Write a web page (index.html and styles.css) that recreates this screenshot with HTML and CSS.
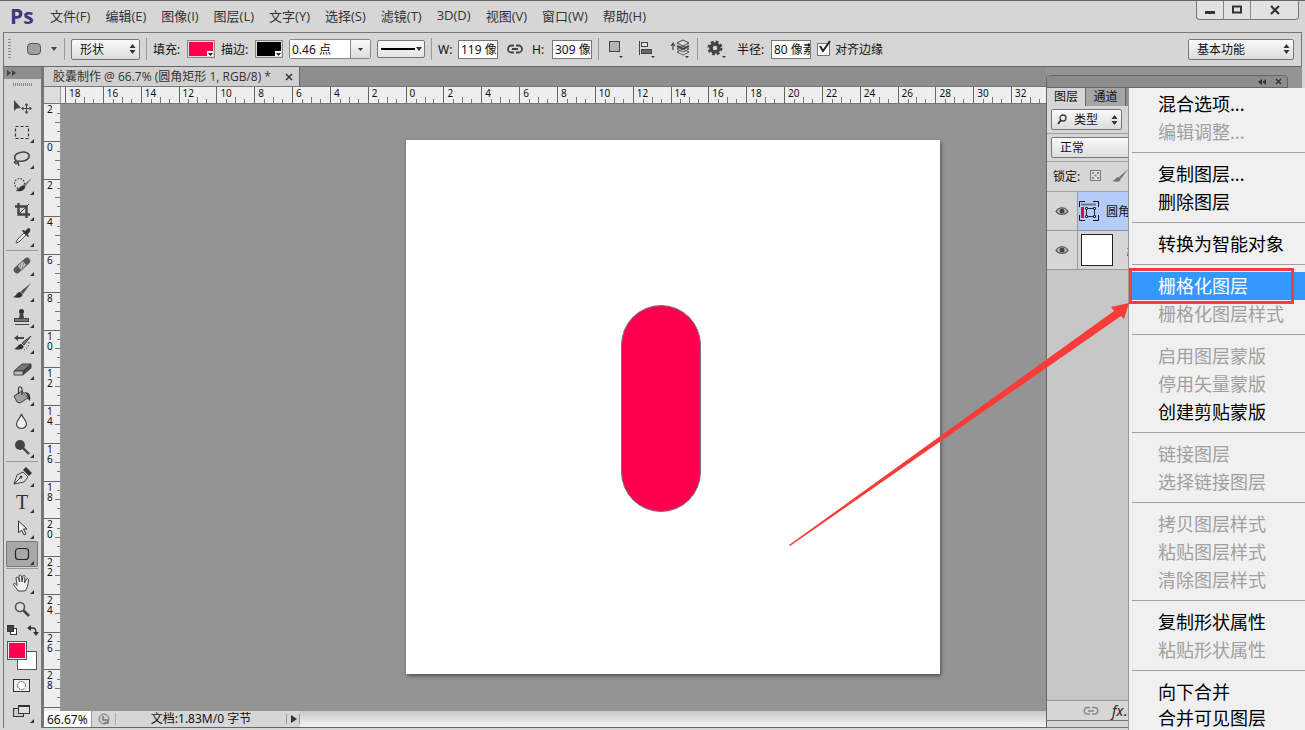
FILE: index.html
```
<!DOCTYPE html>
<html lang="zh-CN">
<head>
    <meta charset="UTF-8">
    <meta name="viewport" content="width=device-width, initial-scale=1.0">
    <title>胶囊制作</title>
    <link rel="stylesheet" href="styles.css">
</head>
<body>
    <div class="app">
        <header class="menubar">
            <div class="logo">Ps</div>
            <nav class="menus">
                <a href="#">文件(F)</a>
                <a href="#">编辑(E)</a>
                <a href="#">图像(I)</a>
                <a href="#">图层(L)</a>
                <a href="#">文字(Y)</a>
                <a href="#">选择(S)</a>
                <a href="#">滤镜(T)</a>
                <a href="#">3D(D)</a>
                <a href="#">视图(V)</a>
                <a href="#">窗口(W)</a>
                <a href="#">帮助(H)</a>
            </nav>
            <div class="window-controls">
                <button type="button" aria-label="最小化"><svg width="12" height="12"><path d="M1 7h10v3H1z" fill="#333"/></svg></button>
                <button type="button" aria-label="最大化"><svg width="12" height="12"><rect x="2" y="2.500" width="8" height="6" fill="none" stroke="#333" stroke-width="2"/></svg></button>
                <button type="button" class="close" aria-label="关闭"><svg width="12" height="12"><path d="M2 2l8 8M10 2l-8 8" stroke="#333" stroke-width="2.200"/></svg></button>
            </div>
        </header>

        <div class="options">
            <span class="grip"></span>
            <button type="button" class="preset" aria-label="圆角矩形工具">
                <svg width="32" height="16"><rect x="1.500" y="2.500" width="13" height="11" rx="3.500" fill="#a0a0a0" stroke="#555"/><path d="M25 6h6l-3 4z" fill="#444"/></svg>
            </button>
            <span class="divider"></span>
            <span class="select-wrap mode">
                <select aria-label="工具模式"><option>形状</option></select>
                <svg width="7" height="10"><path d="M3.500 0L6.500 4h-6zM3.500 10L6.500 6h-6z" fill="#333"/></svg>
            </span>
            <span class="divider"></span>
            <span class="caption">填充:</span>
            <button type="button" class="swatch fill" aria-label="填充颜色"><svg width="7" height="6"><path d="M0 0h7v6H0z" fill="#fff"/><path d="M1 2h5l-2.500 3z" fill="#222"/></svg></button>
            <span class="caption">描边:</span>
            <button type="button" class="swatch stroke" aria-label="描边颜色"><svg width="7" height="6"><path d="M0 0h7v6H0z" fill="#fff"/><path d="M1 2h5l-2.500 3z" fill="#222"/></svg></button>
            <span class="combo">
                <input type="text" value="0.46 点" aria-label="描边宽度">
                <button type="button" aria-label="描边宽度选项"><svg width="7" height="5"><path d="M1 1h5L3.500 4z" fill="#333"/></svg></button>
            </span>
            <button type="button" class="line-style" aria-label="描边类型"><svg width="44" height="18"><path d="M3 9h34" stroke="#000" stroke-width="2"/><path d="M38 7h6l-3 4z" fill="#333"/></svg></button>
            <span class="divider"></span>
            <label class="caption size" for="shape-w">W:</label>
            <input type="text" class="field" id="shape-w" value="119 像素">
            <button type="button" class="icon link" aria-label="链接宽高">
                <svg width="16" height="12"><path d="M7 2.500H4.500a3.500 3.500 0 0 0 0 7H7M9 2.500h2.500a3.500 3.500 0 0 1 0 7H9M5 6h6" fill="none" stroke="#444" stroke-width="1.800"/></svg>
            </button>
            <label class="caption size" for="shape-h">H:</label>
            <input type="text" class="field" id="shape-h" value="309 像素">
            <span class="divider"></span>
            <button type="button" class="icon" aria-label="路径操作">
                <svg width="20" height="22"><rect x="4.500" y="3.500" width="10" height="10" fill="#b4b4b4" stroke="#444"/><path d="M14 18h4l-2 2z" fill="#333"/></svg>
            </button>
            <button type="button" class="icon" aria-label="路径对齐">
                <svg width="20" height="22"><path d="M2.500 3v14" stroke="#444"/><rect x="4.500" y="4.500" width="6" height="4" fill="#ddd" stroke="#444"/><rect x="4.500" y="11.500" width="10" height="4" fill="#666" stroke="#444"/><path d="M14 18h4l-2 2z" fill="#333"/></svg>
            </button>
            <button type="button" class="icon" aria-label="路径排列">
                <svg width="22" height="22"><path d="M4 12V6M2 8l2-3 2 3" fill="none" stroke="#444" stroke-width="1.200"/><path d="M8 14l6 3 6-3-6-3zM8 11l6 3 6-3-6-3z" fill="#ddd" stroke="#555"/><path d="M8 8l6 3 6-3" fill="none" stroke="#444" stroke-width="2"/><path d="M8 5l6 3 6-3-6-3z" fill="#ddd" stroke="#444"/><path d="M16 18h4l-2 2z" fill="#333"/></svg>
            </button>
            <span class="divider"></span>
            <button type="button" class="icon gear" aria-label="几何选项">
                <svg width="20" height="22"><circle cx="9" cy="10" r="6" fill="none" stroke="#444" stroke-width="3" stroke-dasharray="2.700 2"/><circle cx="9" cy="10" r="4" fill="none" stroke="#444" stroke-width="3.500"/><path d="M16 18h4l-2 2z" fill="#333"/></svg>
            </button>
            <label class="caption" for="radius">半径:</label>
            <input type="text" class="field" id="radius" value="80 像素">
            <label class="check"><input type="checkbox" checked><svg width="15" height="15"><path d="M3 6l3 5 7-10" fill="none" stroke="#222" stroke-width="2"/></svg>对齐边缘</label>
            <span class="select-wrap workspace-select">
                <select aria-label="工作区"><option>基本功能</option></select>
                <svg width="7" height="10"><path d="M3.500 0L6.500 4h-6zM3.500 10L6.500 6h-6z" fill="#333"/></svg>
            </span>
        </div>

        <main class="workspace">
            <aside class="toolbar">
                <div class="toolbar-head"><svg width="10" height="8"><path d="M0 1l4 3-4 3zM5 1l4 3-4 3z" fill="#444"/></svg></div>
                <div class="toolbar-grip"></div>
                <div class="tools">
                    <button type="button" aria-label="移动工具"><svg viewBox="0 0 32 26"><path d="M8 7v11l2.500-2.500L15 15z" fill="#444"/><path d="M20.500 11v9M16 15.500h9" stroke="#444"/><path d="M20.500 10l2 2.500h-4zM20.500 21l2-2.500h-4zM15 15.500l2.500-2v4zM26 15.500l-2.500-2v4z" fill="#444"/></svg></button>
                    <button type="button" aria-label="矩形选框工具"><svg viewBox="0 0 32 26"><rect x="9.500" y="7.500" width="13" height="12" fill="none" stroke="#333" stroke-width="1.200" stroke-dasharray="3 2"/><path class="more" d="M28 20v4h-4z"/></svg></button>
                    <button type="button" aria-label="套索工具"><svg viewBox="0 0 32 26"><path d="M11 16C7 14 8 9 14 7.500s10 1 9 4.500-7 5-12 4c-2-.500-3 1-2 2s3 0 3-1 0 2 1 4" fill="none" stroke="#444" stroke-width="1.500"/><path class="more" d="M28 20v4h-4z"/></svg></button>
                    <button type="button" aria-label="快速选择工具"><svg viewBox="0 0 32 26"><circle cx="13.500" cy="12.500" r="5" fill="none" stroke="#333" stroke-width="1.200" stroke-dasharray="1.500 1.500"/><path d="M26 7l-9 7 2 2z" fill="#777"/><path d="M18.500 15c1 4-4 5.500-8 4.500 3-1 3-5 8-4.500z" fill="#333" stroke="#333"/><path class="more" d="M28 20v4h-4z"/></svg></button>
                    <button type="button" aria-label="裁剪工具"><svg viewBox="0 0 32 26"><path d="M12.500 6v11.500H24M9 9.500h11.500V21" fill="none" stroke="#444" stroke-width="2.400"/><path d="M13 17L23 7" stroke="#444"/><path class="more" d="M28 20v4h-4z"/></svg></button>
                    <button type="button" aria-label="吸管工具"><svg viewBox="0 0 32 26"><path d="M10 20l1-3 7-7 2 2-7 7z" fill="#eee" stroke="#555"/><path d="M16 8l6 6 1-1-1.500-2c4-2 3.500-6.500.500-5.500-1 .200-2 1.500-2.500 2.500L17 7z" fill="#333"/><path class="more" d="M28 20v4h-4z"/></svg></button>
                    <hr>
                    <button type="button" aria-label="污点修复画笔工具"><svg viewBox="0 0 32 26"><path d="M11 18L21 9" stroke="#555" stroke-width="6.500" stroke-linecap="round"/><path d="M13.500 16l5-5" stroke="#bbb" stroke-width="5"/><path d="M14 14h1M17 12h1M16 15h1" stroke="#555"/><path class="more" d="M28 20v4h-4z"/></svg></button>
                    <button type="button" aria-label="画笔工具"><svg viewBox="0 0 32 26"><path d="M25 5L14.500 13.500 17 16z" fill="#555"/><path d="M14 14c-4 0-3 4-7 5 4 1.500 10 1 9.500-3z" fill="#333"/><path class="more" d="M28 20v4h-4z"/></svg></button>
                    <button type="button" aria-label="仿制图章工具"><svg viewBox="0 0 32 26"><circle cx="15.500" cy="7.500" r="2.500" fill="#333"/><path d="M14 9h3l1 5h-5z" fill="#444"/><rect x="8.500" y="14.500" width="14" height="3" fill="#777" stroke="#444"/><path d="M9 20.500h14" stroke="#444"/><path class="more" d="M28 20v4h-4z"/></svg></button>
                    <button type="button" aria-label="历史记录画笔工具"><svg viewBox="0 0 32 26"><path d="M8 8l4-3v2h6v2h-6v2z" fill="#444"/><path d="M25 6l-9 7 2 2z" fill="#777" stroke="#444"/><path d="M15.500 14c-4 0-4 4-7.500 5 4 1 10 1 9.500-3z" fill="#333"/><path d="M23 12c0 4-1 6-5 8" fill="none" stroke="#555" stroke-dasharray="1.500 1.500"/><path class="more" d="M28 20v4h-4z"/></svg></button>
                    <button type="button" aria-label="橡皮擦工具"><svg viewBox="0 0 32 26"><path d="M8 15l8-7h9l-8 7z" fill="#777" stroke="#444"/><path d="M17 15l8-7v4l-8 7z" fill="#444" stroke="#444"/><path d="M8 15h9v4H8z" fill="#bbb" stroke="#444"/><path class="more" d="M28 20v4h-4z"/></svg></button>
                    <button type="button" aria-label="油漆桶工具"><svg viewBox="0 0 32 26"><path d="M8 14l8-5 6 7-8 5-3-1z" fill="#a0a0a0" stroke="#444"/><path d="M12.500 12V7c0-3 3-3 3.500 0v6" fill="none" stroke="#333" stroke-width="1.200"/><path d="M18 10c6 0 7 4 6 9l-2-2c0-3-1-5-4-7z" fill="#333"/><path class="more" d="M28 20v4h-4z"/></svg></button>
                    <button type="button" aria-label="模糊工具"><svg viewBox="0 0 32 26"><path d="M15.500 6c1 4 5 6 5 10a5 4.500 0 0 1-10 0c0-4 4-6 5-10z" fill="#eee" stroke="#444" stroke-width="1.200"/><path class="more" d="M28 20v4h-4z"/></svg></button>
                    <button type="button" aria-label="加深工具"><svg viewBox="0 0 32 26"><circle cx="14" cy="11" r="5" fill="#444"/><path d="M17 14l6 6" stroke="#444" stroke-width="2.400"/><path class="more" d="M28 20v4h-4z"/></svg></button>
                    <hr>
                    <button type="button" aria-label="钢笔工具"><svg viewBox="0 0 32 26"><path d="M8 21l3-9 6-3 5 5-4 5z" fill="#ddd" stroke="#444"/><path d="M8 21l6-6" stroke="#444"/><circle cx="15" cy="14" r="1.500" fill="#444"/><path d="M17 7l3-3 6 6-3 3z" fill="#333"/><path class="more" d="M28 20v4h-4z"/></svg></button>
                    <button type="button" class="type-tool" aria-label="横排文字工具"><span>T</span><svg viewBox="0 0 32 26"><path class="more" d="M28 20v4h-4z"/></svg></button>
                    <button type="button" aria-label="路径选择工具"><svg viewBox="0 0 32 26"><path d="M12.500 6v12l3-3 2.500 5 2-1-2.500-5H21z" fill="#eee" stroke="#333"/><path class="more" d="M28 20v4h-4z"/></svg></button>
                    <button type="button" class="active" aria-label="圆角矩形工具"><svg viewBox="0 0 32 26"><rect x="9.500" y="7.500" width="13" height="11" rx="3" fill="none" stroke="#222" stroke-width="1.200"/><path class="more" d="M28 20v4h-4z"/></svg></button>
                    <hr>
                    <button type="button" aria-label="抓手工具"><svg viewBox="0 0 32 26"><path d="M12 21c-1-3-4-4-4.500-7 1-1.500 2.500 0 3.500 1.500L10 8c.500-1.500 2-1 2.500 0l1 4-.500-6c.500-1.500 2-1.500 2.500 0l.500 6 1-6c.500-1.300 2-1 2 .500L18.500 13l2-4c1-1 2-.500 2 1-.500 5-1.500 9-3.500 11z" fill="#eee" stroke="#444"/><path class="more" d="M28 20v4h-4z"/></svg></button>
                    <button type="button" aria-label="缩放工具"><svg viewBox="0 0 32 26"><circle cx="14" cy="11" r="4.500" fill="#ddd" stroke="#555" stroke-width="1.600"/><path d="M17.500 14.500l5.500 5.500" stroke="#444" stroke-width="2.600"/></svg></button>
                </div>
                <div class="swatch-tools">
                    <button type="button" aria-label="默认颜色"><svg width="12" height="12"><rect x="4.500" y="4.500" width="6" height="6" fill="#fff" stroke="#333"/><rect x="1.500" y="1.500" width="6" height="6" fill="#444" stroke="#333"/></svg></button>
                    <button type="button" aria-label="切换颜色"><svg width="12" height="12"><path d="M3 4h3c2 0 3 1 3 5" fill="none" stroke="#333" stroke-width="1.400"/><path d="M0 4l4-3v6zM6 8h6l-3 4z" fill="#333"/></svg></button>
                </div>
                <div class="colors">
                    <button type="button" class="background" aria-label="背景色"></button>
                    <button type="button" class="foreground" aria-label="前景色"></button>
                </div>
                <div class="modes">
                    <button type="button" aria-label="快速蒙版"><svg viewBox="0 0 32 26"><rect x="7.500" y="7.500" width="16" height="12" fill="#eee" stroke="#333"/><circle cx="15.500" cy="13.500" r="4" fill="#fff" stroke="#333" stroke-dasharray="1.500 1"/></svg></button>
                    <button type="button" aria-label="屏幕模式"><svg viewBox="0 0 32 26"><rect x="7.500" y="9.500" width="10" height="8" fill="#ccc" stroke="#333"/><rect x="12.500" y="6.500" width="11" height="8" fill="#ddd" stroke="#333"/><path d="M12 7h12" stroke="#333" stroke-width="2"/><path class="more" d="M28 20v4h-4z"/></svg></button>
                </div>
            </aside>

            <section class="document">
                <div class="tabs">
                    <div class="tab"><a href="#">胶囊制作 @ 66.7% (圆角矩形 1, RGB/8) *</a><button type="button" aria-label="关闭"><svg width="8" height="8"><path d="M1 1l6 6M7 1L1 7" stroke="#333" stroke-width="1.500"/></svg></button></div>
                </div>
                <div class="ruler-top">
                    <div class="corner"></div>
                    <div class="scale">
                        <span>18</span><span>16</span><span>14</span><span>12</span><span>10</span><span>8</span><span>6</span><span>4</span><span>2</span><span>0</span><span>2</span><span>4</span><span>6</span><span>8</span><span>10</span><span>12</span><span>14</span><span>16</span><span>18</span><span>20</span><span>22</span><span>24</span><span>26</span><span>28</span><span>30</span><span>32</span>
                    </div>
                </div>
                <div class="stage">
                    <div class="ruler-left">
                        <span>2</span><span>0</span><span>2</span><span>4</span><span>6</span><span>8</span><span>10</span><span>12</span><span>14</span><span>16</span><span>18</span><span>20</span><span>22</span><span>24</span><span>26</span><span>28</span>
                    </div>
                    <div class="canvas">
                        <div class="page"><div class="capsule"></div></div>
                    </div>
                </div>
                <footer class="statusbar">
                    <input type="text" class="zoom" value="66.67%" aria-label="缩放比例">
                    <button type="button" class="preview" aria-label="预览"><svg width="12" height="12"><circle cx="6" cy="6" r="5" fill="#ccc" stroke="#777"/><path d="M5 3v4h5v3H6" fill="none" stroke="#777" stroke-width="1.500"/></svg></button>
                    <span class="doc-size">文档:1.83M/0 字节</span>
                    <button type="button" class="more-info" aria-label="状态选项"><svg width="8" height="10"><path d="M1 1v8l6-4z" fill="#333"/></svg></button>
                    <span class="scrollbar"></span>
                </footer>
            </section>

            <aside class="panel">
                <div class="panel-head">
                    <svg width="9" height="6"><path d="M4 0v6L0 3zM8 0v6L4.500 3z" fill="#333"/></svg>
                    <svg width="7" height="7"><path d="M1 1l5 5M6 1L1 6" stroke="#333" stroke-width="1.400"/></svg>
                </div>
                <div class="panel-tabs"><a href="#" class="current">图层</a><a href="#">通道</a></div>
                <div class="panel-row filter">
                    <span class="select-wrap">
                        <svg class="lens" width="10" height="11"><circle cx="6" cy="4" r="3" fill="none" stroke="#333" stroke-width="1.300"/><path d="M4 6L1 10" stroke="#333" stroke-width="1.800"/></svg>
                        <select aria-label="图层筛选"><option>类型</option></select>
                        <svg width="7" height="10"><path d="M3.500 0L6.500 4h-6zM3.500 10L6.500 6h-6z" fill="#333"/></svg>
                    </span>
                </div>
                <div class="panel-row blend">
                    <select aria-label="混合模式"><option>正常</option></select>
                </div>
                <div class="panel-row lock">
                    <span>锁定:</span>
                    <button type="button" aria-label="锁定透明像素"><svg width="12" height="12"><rect x=".500" y=".500" width="10" height="10" fill="#ddd" stroke="#777"/><path d="M2 2h2v2H2zM7 2h2v2H7zM4.500 4.500h2v2h-2zM2 7h2v2H2zM7 7h2v2H7z" fill="#888"/></svg></button>
                    <button type="button" aria-label="锁定图像像素"><svg width="17" height="14"><path d="M17 0L8 8l2 2z" fill="#777"/><path d="M8 8c-4 0-3 3-7 4 4 1.500 9 1 8.500-2z" fill="#777"/></svg></button>
                </div>
                <ul class="layers">
                    <li class="selected">
                        <button type="button" class="eye" aria-label="显示图层"><svg width="14" height="10"><path d="M1 5.500c3-5 9-5 12 0-3 4-9 4-12 0z" fill="#bbb" stroke="#555" stroke-width="1.200"/><circle cx="7" cy="5" r="2.500" fill="#444"/></svg></button>
                        <svg class="thumb-shape" width="20" height="20"><path d="M.500 6V.500H6M14 .500h5.500V6M19.500 14v5.500H14M6 19.500H.500V14" fill="none" stroke="#111"/><path d="M2 3.500h15" fill="none" stroke="#777" stroke-width="2"/><path d="M2 6h3v11H2z" fill="#c01848"/><rect x="7.500" y="7.500" width="8" height="8" fill="#b9cdf5" stroke="#222a50"/><path d="M6.500 6.500h2v2h-2zM14.500 6.500h2v2h-2zM6.500 14.500h2v2h-2zM14.500 14.500h2v2h-2z" fill="#eef" stroke="#222a50"/></svg>
                        <span>圆角矩形 1</span>
                    </li>
                    <li>
                        <button type="button" class="eye" aria-label="显示图层"><svg width="14" height="10"><path d="M1 5.500c3-5 9-5 12 0-3 4-9 4-12 0z" fill="#bbb" stroke="#555" stroke-width="1.200"/><circle cx="7" cy="5" r="2.500" fill="#444"/></svg></button>
                        <span class="thumb"></span>
                        <em>背景</em>
                    </li>
                </ul>
                <div class="panel-foot">
                    <svg width="16" height="10"><path d="M7 1.500H4.500a3 3 0 0 0 0 6.500H7M9 1.500h2.500a3 3 0 0 1 0 6.500H9M5 5h6" fill="none" stroke="#888" stroke-width="1.500"/></svg>
                    <em>fx</em><span>.</span>
                </div>
                <div class="panel-end"></div>
            </aside>
        </main>

        <menu class="context-menu">
            <li><button type="button">混合选项...</button></li>
            <li><button type="button" disabled>编辑调整...</button></li>
            <li class="separator"></li>
            <li><button type="button">复制图层...</button></li>
            <li><button type="button">删除图层</button></li>
            <li class="separator"></li>
            <li><button type="button">转换为智能对象</button></li>
            <li class="separator"></li>
            <li class="highlight"><button type="button">栅格化图层</button></li>
            <li><button type="button" disabled>栅格化图层样式</button></li>
            <li class="separator"></li>
            <li><button type="button" disabled>启用图层蒙版</button></li>
            <li><button type="button" disabled>停用矢量蒙版</button></li>
            <li><button type="button">创建剪贴蒙版</button></li>
            <li class="separator"></li>
            <li><button type="button" disabled>链接图层</button></li>
            <li><button type="button" disabled>选择链接图层</button></li>
            <li class="separator"></li>
            <li><button type="button" disabled>拷贝图层样式</button></li>
            <li><button type="button" disabled>粘贴图层样式</button></li>
            <li><button type="button" disabled>清除图层样式</button></li>
            <li class="separator"></li>
            <li><button type="button">复制形状属性</button></li>
            <li><button type="button" disabled>粘贴形状属性</button></li>
            <li class="separator"></li>
            <li><button type="button">向下合并</button></li>
            <li><button type="button">合并可见图层</button></li>
        </menu>

        <svg class="arrow" width="340" height="243" viewBox="0 0 340 243"><path d="M0 242L325 8l-3-4 18-4-5 16-3-3L1 243z" fill="#f93c37"/></svg>
    </div>
</body>
</html>
```
FILE: styles.css
```
* {
    box-sizing: border-box;
}
body {
    margin: 0;
    font-family: "Noto Sans", "Noto Sans CJK SC", sans-serif;
    font-size: 12px;
    color: #111;
    background: #d6d6d6;
}
a {
    color: inherit;
    text-decoration: none;
}
button {
    margin: 0;
    padding: 0;
    border: 0;
    background: none;
    font: inherit;
    color: inherit;
}
input,
select {
    margin: 0;
    font: inherit;
    color: inherit;
}
svg {
    display: block;
    flex: none;
}
.app {
    position: relative;
    display: flex;
    flex-direction: column;
    height: 100vh;
    overflow: hidden;
}

/* menu bar */
.menubar {
    display: flex;
    align-items: center;
    height: 32px;
    padding: 0 0 2px 10px;
    border-top: 1px solid #666;
}
.logo {
    width: 40px;
    font-family: "Open Sans", sans-serif;
    font-size: 21px;
    font-weight: bold;
    line-height: 28px;
    color: #3e3878;
}
.menus {
    display: flex;
    gap: 15px;
    flex: 1;
    font-family: "Open Sans", "Noto Sans CJK SC", sans-serif;
    font-size: 13px;
    white-space: nowrap;
    color: #333;
}
.window-controls {
    display: flex;
    align-self: flex-start;
    height: 19px;
    margin-right: 6px;
    border: 1px solid #777;
    border-top: 0;
    border-radius: 0 0 4px 4px;
    background: #e2e2e2;
}
.window-controls button {
    display: flex;
    align-items: center;
    justify-content: center;
    width: 27px;
    border-right: 1px solid #888;
}
.window-controls .close {
    width: 47px;
    border-right: 0;
}

/* options bar */
.options {
    display: flex;
    align-items: center;
    gap: 6px;
    height: 35px;
    margin: 0 3px;
    padding: 0 7px 1px 4px;
    border: 1px solid #777;
    border-bottom-color: #666;
    background: #d6d6d6;
    white-space: nowrap;
}
.grip {
    width: 3px;
    height: 20px;
    margin-right: 9px;
    background: repeating-linear-gradient(#888 0 1px, #d6d6d6 1px 3px);
}
.divider {
    width: 1px;
    height: 22px;
    background: #999;
}
.caption {
    width: 28px;
}
.caption.size {
    width: 14px;
}
.select-wrap {
    position: relative;
    display: flex;
    align-items: center;
}
.select-wrap select,
.blend select {
    appearance: none;
    width: 100%;
    height: 21px;
    padding: 0 8px;
    border: 1px solid #777;
    border-radius: 2px;
    background: linear-gradient(#fafafa, #dcdcdc);
}
.select-wrap svg {
    position: absolute;
    right: 4px;
    pointer-events: none;
}
.mode {
    width: 69px;
}
.swatch {
    display: flex;
    align-items: flex-end;
    justify-content: flex-end;
    width: 28px;
    height: 18px;
    border: 1px solid #888;
    outline: 1px solid #ddd;
    outline-offset: -2px;
}
.fill {
    background: #ff004e;
}
.stroke {
    background: #000;
}
.combo {
    display: flex;
    width: 82px;
    height: 20px;
    border: 1px solid #888;
    border-radius: 2px;
    background: #fff;
}
.combo input {
    flex: 1;
    min-width: 0;
    padding: 0 2px;
    border: 0;
    background: #fff;
}
.combo button {
    display: flex;
    align-items: center;
    justify-content: center;
    width: 20px;
    border-left: 1px solid #888;
    background: linear-gradient(#fafafa, #dcdcdc);
}
.line-style {
    width: 48px;
    height: 18px;
    border: 1px solid #777;
    border-radius: 2px;
    background: linear-gradient(#fafafa, #e4e4e4);
}
.line-style svg {
    margin-top: -1px;
}
.field {
    width: 40px;
    height: 19px;
    padding: 0 0 0 2px;
    border: 1px solid #777;
    background: #fff;
}
.link {
    margin: 0 3px;
}
.options .icon + .icon {
    margin-left: 6px;
}
.options .gear {
    margin: 0 5px 0 2px;
}
.check {
    position: relative;
    display: flex;
    align-items: center;
    gap: 5px;
}
.check input {
    appearance: none;
    width: 13px;
    height: 13px;
    border: 1px solid #777;
    background: #fff;
}
.check svg {
    position: absolute;
    left: 0;
    top: 0;
    pointer-events: none;
}
.workspace-select {
    width: 106px;
    margin-left: auto;
}

/* workspace */
.workspace {
    display: flex;
    flex: 1;
    min-height: 0;
    margin: 0 3px 2px;
    border-left: 1px solid #777;
    background: #949494;
}
.toolbar {
    display: flex;
    flex-direction: column;
    width: 40px;
    border-right: 3px solid #777;
    background: #d6d6d6;
}
.toolbar-head {
    height: 12px;
    padding: 2px 3px;
    background: #8e8e8e;
}
.toolbar-grip {
    width: 20px;
    height: 3px;
    margin: 4px auto 7px;
    background: repeating-linear-gradient(90deg, #888 0 1px, #d6d6d6 1px 2px);
}
.tools,
.modes {
    padding: 0 3px 0 2px;
}
.tools button,
.modes button {
    display: block;
    width: 32px;
    height: 26px;
}
.tools svg,
.modes svg {
    width: 32px;
    height: 26px;
}
.tools hr {
    height: 1px;
    margin: 1px 0;
    border: 0;
    background: #999;
}
.tools .active {
    border-radius: 2px;
    background: #a8a8a8;
    box-shadow: inset 0 0 0 1px #777;
}
.tools .type-tool {
    display: grid;
    grid-template: 26px / 32px;
    place-items: center;
    font-family: "Liberation Serif", serif;
    font-size: 20px;
    line-height: 26px;
    color: #333;
}
.type-tool span,
.type-tool svg {
    grid-area: 1 / 1;
}
.more {
    fill: #333;
}
.swatch-tools {
    display: flex;
    justify-content: space-between;
    padding: 2px 2px 5px;
}
.colors {
    display: grid;
    grid-template: 10px 19px / 10px 19px;
    height: 29px;
    margin-left: 3px;
}
.colors button {
    width: 20px;
    height: 19px;
    border: 1px solid #555;
}
.background {
    grid-area: 2 / 2;
    background: #fff;
}
.foreground {
    grid-area: 1 / 1;
    background: #ff004e;
    box-shadow: inset 0 0 0 1px #eee;
}
.modes {
    display: flex;
    flex-direction: column;
    gap: 1px;
    padding-top: 2px;
}

/* document */
.document {
    display: flex;
    flex-direction: column;
    flex: 1;
    min-width: 0;
}
.tabs {
    display: flex;
    height: 20px;
    background: #8e8e8e;
    border-bottom: 1px solid #777;
}
.tab {
    display: flex;
    align-items: center;
    gap: 14px;
    padding: 0 6px 0 9px;
    border-right: 1px solid #666;
    background: #d0d0d0;
    font-family: "Open Sans", "Noto Sans CJK SC", sans-serif;
    line-height: 18px;
    white-space: nowrap;
    color: #333;
}
.ruler-top {
    display: flex;
    height: 17px;
    background: #eee;
    border-bottom: 1px solid #777;
    overflow: hidden;
}
.corner {
    width: 17px;
    margin-right: 4px;
    border-right: 1px solid #999;
    background: #ddd;
}
.scale {
    display: flex;
    flex: 1;
    margin-right: -3px;
}
.scale span,
.ruler-left span {
    flex: 1;
    font-size: 10px;
}
.scale span {
    height: 16px;
    min-width: 0;
    padding-left: 3px;
    line-height: 12px;
    border-left: 1px solid #666;
    background:
        linear-gradient(#777, #777) 25% 100% / 1px 4px no-repeat,
        linear-gradient(#777, #777) 50% 100% / 1px 6px no-repeat,
        linear-gradient(#777, #777) 75% 100% / 1px 4px no-repeat;
}
.stage {
    display: flex;
    flex: 1;
    min-height: 0;
}
.ruler-left {
    display: flex;
    flex-direction: column;
    width: 17px;
    padding-bottom: 3px;
    border-right: 1px solid #999;
    background: #eee;
}
.ruler-left span {
    min-height: 0;
    padding: 0 8px 0 3px;
    line-height: 10px;
    word-break: break-all;
    border-bottom: 1px solid #666;
    background:
        linear-gradient(#777, #777) 100% 25% / 3px 1px no-repeat,
        linear-gradient(#777, #777) 100% 50% / 5px 1px no-repeat,
        linear-gradient(#777, #777) 100% 75% / 3px 1px no-repeat;
}
.canvas {
    flex: 1;
    min-width: 0;
    padding: 36px 0 0 345px;
    overflow: hidden;
    background: #949494;
}
.page {
    display: grid;
    justify-content: start;
    width: 534px;
    height: 534px;
    padding: 165px 215px;
    background: #fff;
    box-shadow: 1px 2px 4px rgba(0, 0, 0, 0.45);
}
.capsule {
    width: 80px;
    height: 207px;
    border: 1px solid #777;
    border-radius: 40px;
    background: #ff004e;
}
.statusbar {
    display: flex;
    align-items: center;
    height: 17px;
    border-bottom: 1px solid #666;
    background: #d6d6d6;
}
.zoom {
    width: 48px;
    height: 16px;
    padding: 0 3px;
    border: 0;
    border-right: 1px solid #999;
    background: #fff;
}
.preview {
    width: 24px;
    padding-left: 6px;
    border-right: 1px solid #aaa;
}
.doc-size {
    width: 170px;
    text-align: center;
    line-height: 16px;
}
.more-info {
    width: 14px;
    padding-left: 3px;
    border-left: 1px solid #999;
    border-right: 1px solid #999;
}
.scrollbar {
    flex: 1;
    height: 16px;
    background: linear-gradient(#c8c8c8, #f4f4f4);
}

/* layers panel */
.panel {
    display: flex;
    flex-direction: column;
    width: 242px;
    margin: 8px 14px 0 0;
    border-left: 1px solid #666;
    border-radius: 4px 4px 0 0;
    background: #c6c6c6;
    white-space: nowrap;
}
.panel-head {
    display: flex;
    align-items: center;
    justify-content: flex-end;
    gap: 8px;
    height: 13px;
    padding-right: 5px;
    border: 1px solid #666;
    border-left: 0;
    border-radius: 4px 4px 0 0;
    background: #8c8c8c;
}
.panel-tabs {
    display: flex;
    height: 18px;
    background: #8e8e8e;
}
.panel-tabs a {
    width: 40px;
    line-height: 18px;
    text-align: center;
    border-right: 1px solid #666;
    background: #a6a6a6;
}
.panel-tabs .current {
    width: 39px;
    background: #d6d6d6;
}
.panel-row {
    display: flex;
    align-items: center;
    height: 28px;
    padding-left: 4px;
    border-bottom: 1px solid #a0a0a0;
    background: #d6d6d6;
}
.filter .select-wrap {
    width: 71px;
}
.filter select {
    padding-left: 22px;
}
.filter .lens {
    left: 6px;
    right: auto;
}
.blend select {
    width: 160px;
}
.lock {
    gap: 10px;
    height: 30px;
    padding: 0 0 2px 6px;
}
.lock button + button {
    margin-left: -1px;
}
.layers {
    flex: 1;
    margin: 0;
    padding: 0;
    list-style: none;
}
.layers li {
    display: flex;
    align-items: center;
    height: 39px;
    border-bottom: 1px solid #999;
    background: linear-gradient(90deg, #d6d6d6 30px, #999 30px 31px, #d6d6d6 31px);
}
.layers .selected {
    background: linear-gradient(90deg, #d6d6d6 30px, #999 30px 31px, #b4ccfa 31px);
}
.eye {
    width: 31px;
    padding-left: 8px;
}
.thumb-shape {
    margin: 0 7px 0 1px;
}
.thumb {
    width: 32px;
    height: 32px;
    margin: 0 12px 0 3px;
    border: 1px solid #222;
    background: #fff;
}
.panel-foot {
    display: flex;
    align-items: center;
    height: 21px;
    padding-left: 36px;
    border-top: 1px solid #999;
    border-bottom: 1px solid #777;
    background: #d6d6d6;
    font-family: "Noto Sans", sans-serif;
    font-size: 14px;
    color: #222;
}
.panel-foot em {
    margin-left: 13px;
}
.panel-end {
    height: 7px;
    border-bottom: 1px solid #777;
    background: #d6d6d6;
}

/* layer context menu */
.context-menu {
    position: absolute;
    top: 88px;
    right: 0;
    width: 177px;
    margin: 0;
    padding: 2px 0 0;
    list-style: none;
    border-left: 1px solid #999;
    background: #f0f0f0;
    font-size: 18px;
    white-space: nowrap;
    color: #000;
}
.context-menu button {
    display: block;
    width: 100%;
    height: 28px;
    padding-left: 29px;
    line-height: 26px;
    text-align: left;
}
.context-menu li:last-child button {
    height: 24px;
    line-height: 24px;
}
.context-menu button:disabled {
    color: #a0a0a0;
}
.separator {
    height: 14px;
    padding: 6px 0 7px 3px;
}
.separator::before {
    content: "";
    display: block;
    height: 1px;
    background: #a0a0a0;
}
.highlight {
    position: relative;
    background: #3399ff;
    color: #fff;
}
.highlight::after {
    content: "";
    position: absolute;
    inset: -4px 11px -4px 0;
    border: 3px solid #f93c37;
}

/* pointer towards the highlighted command */
.arrow {
    position: absolute;
    top: 303px;
    right: 176px;
    pointer-events: none;
}
```
